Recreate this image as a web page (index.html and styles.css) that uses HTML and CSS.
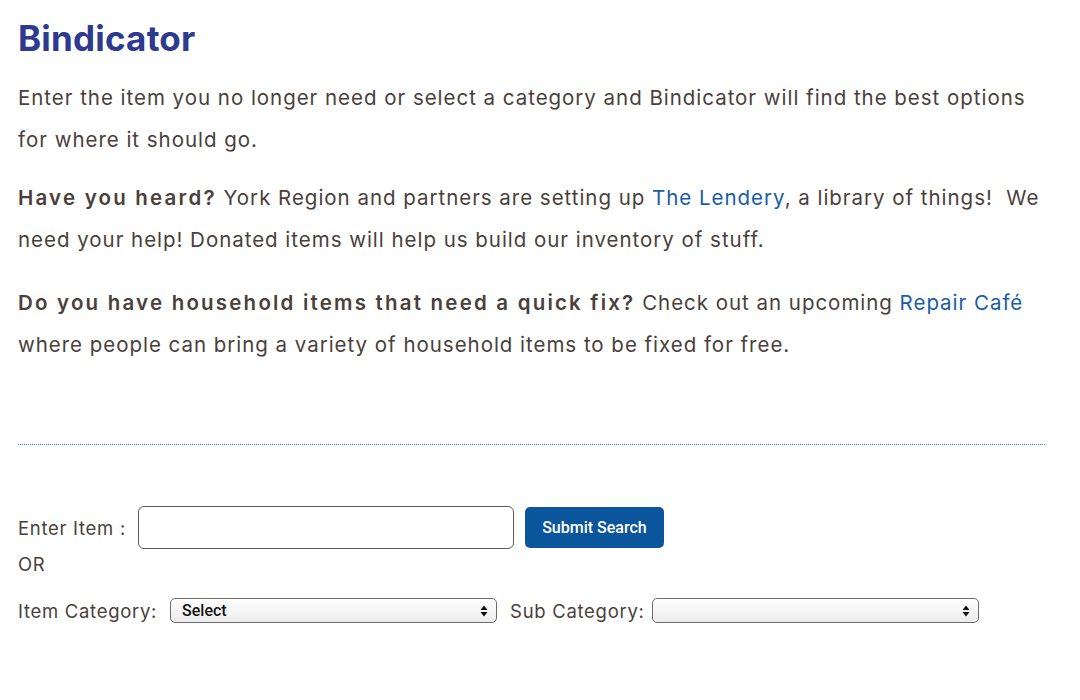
FILE: index.html
```html
<!DOCTYPE html>
<html lang="en">
<head>
<meta charset="utf-8">
<title>Bindicator</title>
<link rel="stylesheet" href="styles.css">
</head>
<body>
<main class="page">
  <h1 class="title">Bindicator</h1>
  <p class="intro">Enter the item you no longer need or select a category and Bindicator will find the best options for where it should go.</p>
  <p class="intro"><strong>Have you heard?</strong> York Region and partners are setting up <a href="#">The Lendery</a>, a library of things!&nbsp; We need your help! Donated items will help us build our inventory of stuff.</p>
  <p class="intro intro-last"><strong>Do you have household items that need a quick fix?</strong> Check out an upcoming <a href="#">Repair Café</a> where people can bring a variety of household items to be fixed for free.</p>

  <hr class="divider">

  <form class="search">
    <div class="row">
      <label class="label" for="item">Enter Item :</label>
      <input class="text-input" id="item" type="text">
      <button class="btn" type="button">Submit Search</button>
    </div>
    <div class="or">OR</div>
    <div class="row">
      <label class="label" for="cat">Item Category:</label>
      <span class="select-wrap">
        <select class="select" id="cat"><option>Select</option></select>
        <svg class="arrows" width="8" height="12" viewBox="0 0 8 12"><path d="M4 0.5 L7.5 5 H0.5 Z M4 11.5 L7.5 7 H0.5 Z" fill="#111"/></svg>
      </span>
      <label class="label label-sub" for="sub">Sub Category:</label>
      <span class="select-wrap select-wrap-sub">
        <select class="select" id="sub"><option></option></select>
        <svg class="arrows" width="8" height="12" viewBox="0 0 8 12"><path d="M4 0.5 L7.5 5 H0.5 Z M4 11.5 L7.5 7 H0.5 Z" fill="#111"/></svg>
      </span>
    </div>
  </form>
</main>
</body>
</html>
```
FILE: styles.css
```css
html, body {
  margin: 0;
  padding: 0;
  background: #ffffff;
}

body {
  font-family: Inter, "Open Sans", "Noto Sans", sans-serif;
  color: #4a3f3b;
}

.page {
  width: 1040px;
  padding: 0 18px;
}

.title {
  margin: 17px 0 18px;
  font-size: 35px;
  line-height: 42px;
  font-weight: 700;
  color: #2e3a8f;
  letter-spacing: 0.2px;
}

.intro {
  margin: 0 0 16px;
  font-size: 20.5px;
  line-height: 42px;
  letter-spacing: 0.97px;
}

.intro-last {
  margin-top: 21px;
}

.intro strong {
  font-weight: 600;
  letter-spacing: 2.2px;
}

.intro a {
  color: #1a5ca6;
  text-decoration: none;
}

.divider {
  margin: 78px 0 0;
  border: 0;
  border-top: 1px dotted #3a8cc0;
  height: 0;
  width: 1027px;
}

.search {
  padding-top: 61px;
}

.row {
  display: flex;
  align-items: center;
}

.label {
  font-size: 18.5px;
  letter-spacing: 0.7px;
}

.text-input {
  box-sizing: border-box;
  margin-left: 12px;
  width: 376px;
  height: 43px;
  border: 1px solid #5e5a58;
  border-radius: 6px;
  background: #fff;
  padding: 0 8px;
  font-size: 16px;
}

.btn {
  box-sizing: border-box;
  margin-left: 11px;
  width: 139px;
  height: 41px;
  border: 0;
  border-radius: 5px;
  background: #0b559d;
  color: #fff;
  font-family: Roboto, "Liberation Sans", Arial, sans-serif;
  font-size: 16px;
  font-weight: 500;
  letter-spacing: 0;
}

.or {
  margin: 3px 0 22px;
  font-size: 18.5px;
  line-height: 24px;
  letter-spacing: 0.7px;
}

.select-wrap {
  position: relative;
  display: inline-block;
  margin-left: 13px;
}

.select-wrap-sub {
  margin-left: 7px;
}

.label-sub {
  margin-left: 13px;
}

.select {
  appearance: none;
  -webkit-appearance: none;
  box-sizing: border-box;
  display: block;
  width: 327px;
  height: 25px;
  border: 1px solid #6f6b69;
  border-radius: 5px;
  background: linear-gradient(#ffffff, #ececec);
  padding: 0 20px 0 11px;
  color: #111;
  font-family: Roboto, "Liberation Sans", Arial, sans-serif;
  font-size: 16px;
  font-weight: 500;
}

.arrows {
  position: absolute;
  right: 9px;
  top: 7px;
  pointer-events: none;
}
```
